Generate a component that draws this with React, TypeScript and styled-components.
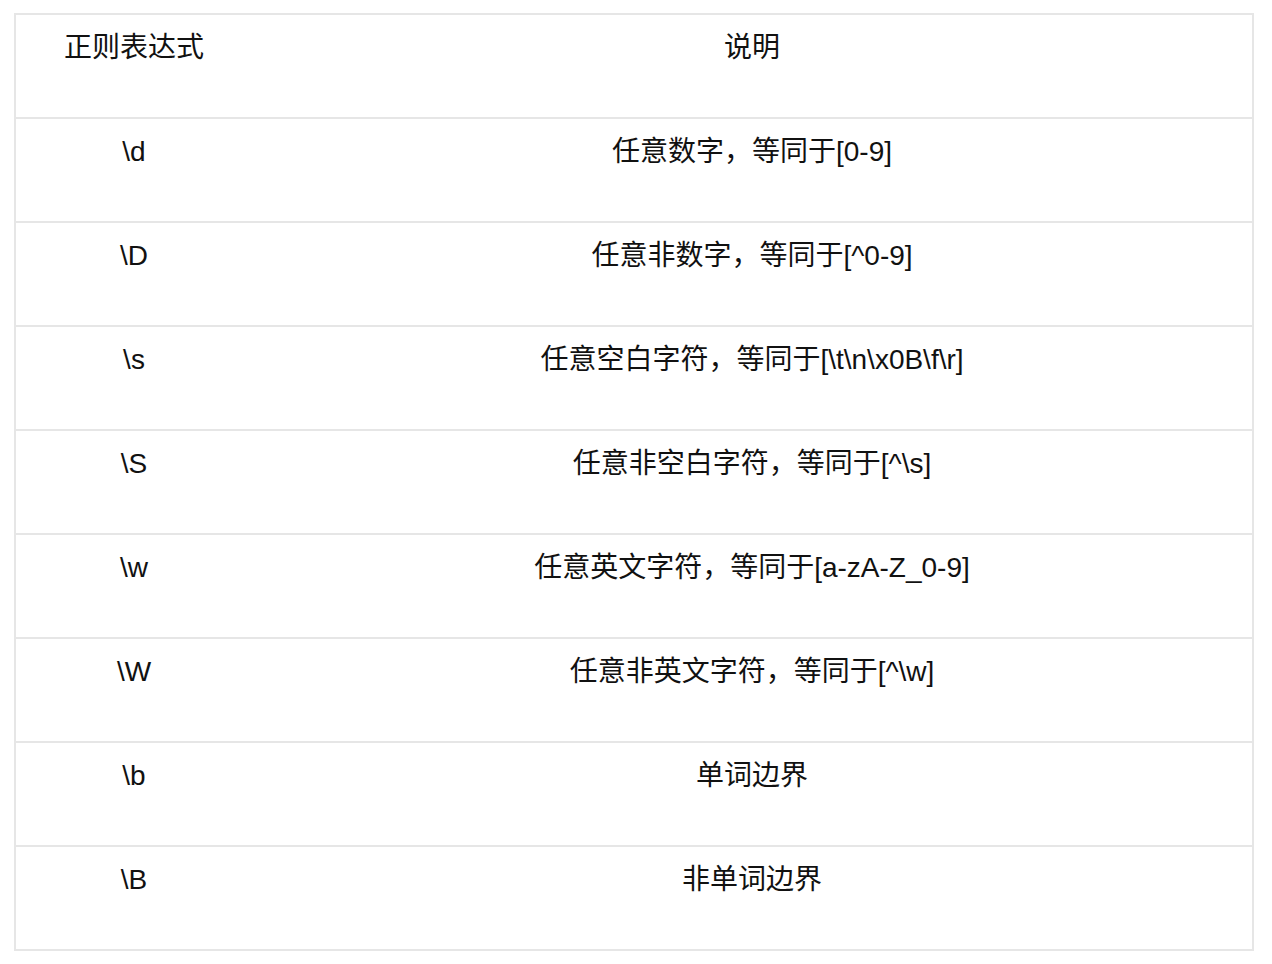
import React from 'react';
import styled, { createGlobalStyle } from 'styled-components';

const rows: [string, string][] = [
  ['\\d', '任意数字，等同于[0-9]'],
  ['\\D', '任意非数字，等同于[^0-9]'],
  ['\\s', '任意空白字符，等同于[\\t\\n\\x0B\\f\\r]'],
  ['\\S', '任意非空白字符，等同于[^\\s]'],
  ['\\w', '任意英文字符，等同于[a-zA-Z_0-9]'],
  ['\\W', '任意非英文字符，等同于[^\\w]'],
  ['\\b', '单词边界'],
  ['\\B', '非单词边界'],
];

const GlobalStyle = createGlobalStyle`
  html, body {
    margin: 0;
    padding: 0;
    background: #ffffff;
  }
  body {
    font-family: "Liberation Sans", "Noto Sans CJK SC", sans-serif;
    color: #111111;
  }
`;

const Page = styled.div`
  padding: 13px 0 0 14px;
`;

const Table = styled.div`
  width: 1240px;
  box-sizing: border-box;
  border: 2px solid #e6e6e6;
  border-bottom: none;
`;

const Row = styled.div`
  display: grid;
  grid-template-columns: 236px 1fr;
  height: 104px;
  box-sizing: border-box;
  border-bottom: 2px solid #e6e6e6;
`;

const Cell = styled.div`
  padding-top: 17px;
  text-align: center;
  font-size: 28px;
  line-height: 32px;
  white-space: nowrap;
`;

export default function App() {
  return (
    <>
      <GlobalStyle />
      <Page>
        <Table>
          <Row>
            <Cell>正则表达式</Cell>
            <Cell>说明</Cell>
          </Row>
          {rows.map(([re, desc]) => (
            <Row key={re}>
              <Cell>{re}</Cell>
              <Cell>{desc}</Cell>
            </Row>
          ))}
        </Table>
      </Page>
    </>
  );
}
